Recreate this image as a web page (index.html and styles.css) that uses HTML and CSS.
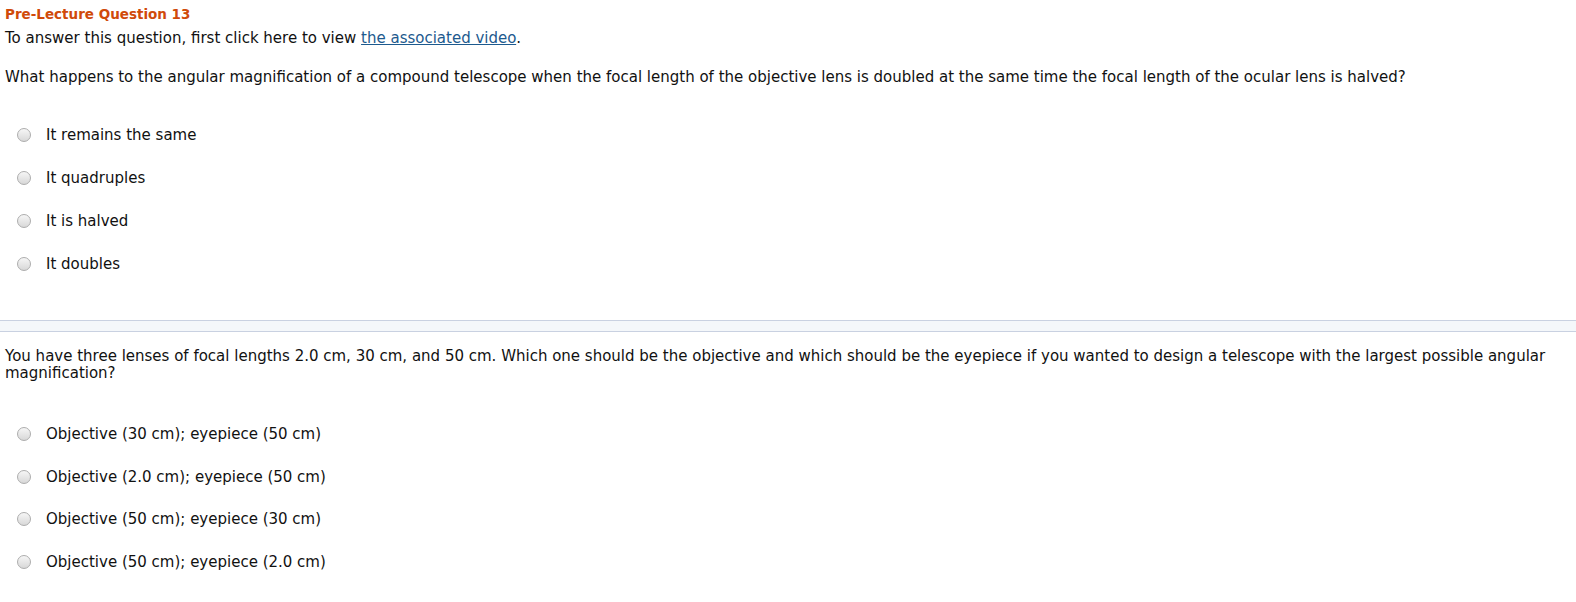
FILE: index.html
```html
<!DOCTYPE html>
<html lang="en">
<head>
    <meta charset="UTF-8">
    <title>Pre-Lecture Question 13</title>
    <link rel="stylesheet" href="styles.css">
</head>
<body>
<div class="question">
    <h3 class="title">Pre-Lecture Question 13</h3>
    <p class="intro">To answer this question, first click here to view <a href="javascript:;">the associated video</a>.</p>
    <p class="stem">What happens to the angular magnification of a compound telescope when the focal length of the objective lens is doubled at the same time the focal length of the ocular lens is halved?</p>
    <ul class="choices">
        <li><span class="radio"></span>It remains the same</li>
        <li><span class="radio"></span>It quadruples</li>
        <li><span class="radio"></span>It is halved</li>
        <li><span class="radio"></span>It doubles</li>
    </ul>
</div>
<div class="divider"></div>
<div class="question second">
    <p class="stem">You have three lenses of focal lengths 2.0 cm, 30 cm, and 50 cm. Which one should be the objective and which should be the eyepiece if you wanted to design a telescope with the largest possible angular magnification?</p>
    <ul class="choices">
        <li><span class="radio"></span>Objective (30 cm); eyepiece (50 cm)</li>
        <li><span class="radio"></span>Objective (2.0 cm); eyepiece (50 cm)</li>
        <li><span class="radio"></span>Objective (50 cm); eyepiece (30 cm)</li>
        <li><span class="radio"></span>Objective (50 cm); eyepiece (2.0 cm)</li>
    </ul>
</div>
</body>
</html>
```

FILE: styles.css
```css
body{
    margin: 0;
    background: #fff;
    color: #111;
    font-family: "DejaVu Sans", Verdana, sans-serif;
    font-size: 15px;
}
h3,p,ul{
    margin: 0;
    padding: 0;
}
a{
    color: #1d5a8e;
    text-decoration: underline;
}

.question{
    padding: 4px 5px 0;
}
.title{
    font-size: 13.5px;
    line-height: 20px;
    color: #d04a0a;
    font-weight: bold;
}
.intro{
    line-height: 20px;
    margin-top: 4px;
}
.stem{
    line-height: 17px;
    margin-top: 21px;
}
.choices{
    list-style: none;
    margin-top: 41px;
    padding-bottom: 21px;
}
.choices li{
    height: 43px;
    line-height: 17px;
    display: flex;
    align-items: flex-start;
}
.radio{
    width: 12px;
    height: 12px;
    border: 1px solid #adadad;
    border-radius: 50%;
    background: linear-gradient(#f6f6f6, #d8d8d8);
    margin: 1px 15px 0 12px;
}

.divider{
    height: 10px;
    border-top: 1px solid #c9d1e1;
    border-bottom: 1px solid #c9d1e1;
    background: #f4f7fa;
}

.second .stem{
    margin-top: 12px;
}
.second .choices{
    margin-top: 44px;
}
.second .choices li{
    height: 42.5px;
}
```
